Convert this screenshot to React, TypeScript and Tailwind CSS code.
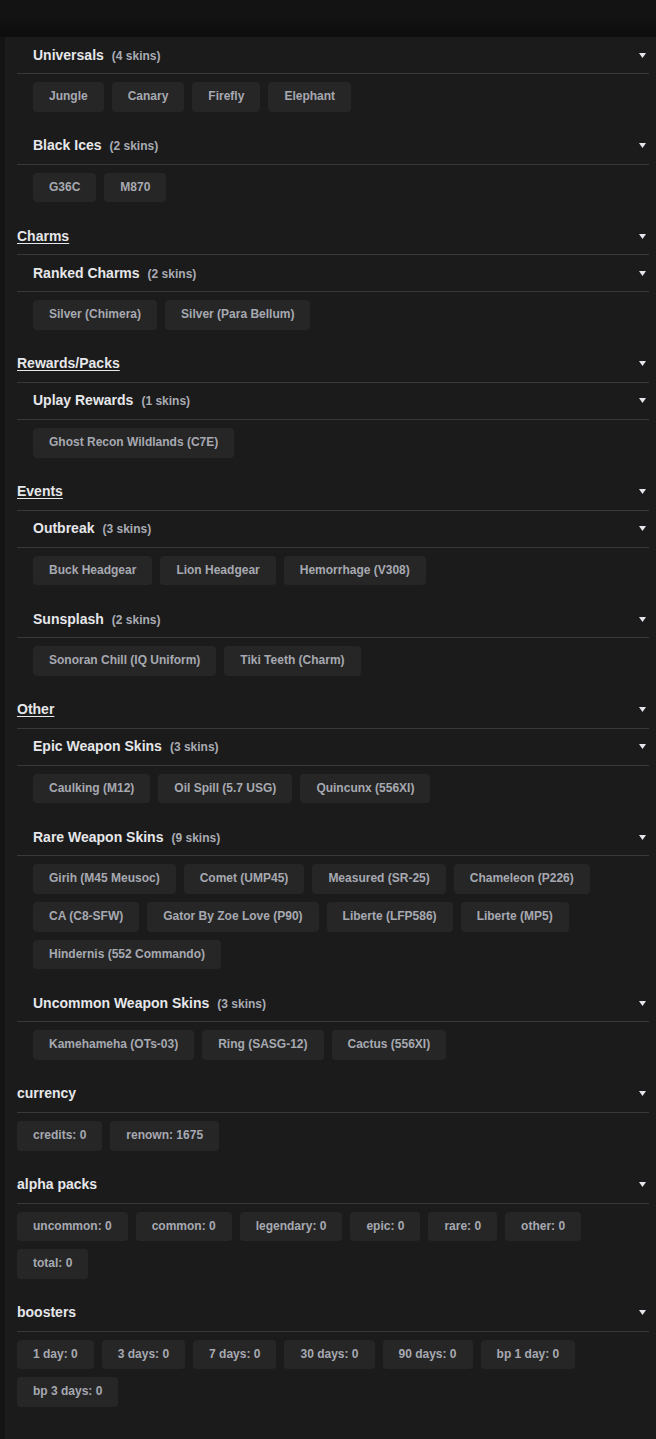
import React from "react";

type Sub = { title: string; items: string[] };
type Cat = { title: string; subs: Sub[] };

const categories: Cat[] = [
  {
    title: "",
    subs: [
      { title: "Universals", items: ["Jungle", "Canary", "Firefly", "Elephant"] },
      { title: "Black Ices", items: ["G36C", "M870"] },
    ],
  },
  {
    title: "Charms",
    subs: [{ title: "Ranked Charms", items: ["Silver (Chimera)", "Silver (Para Bellum)"] }],
  },
  {
    title: "Rewards/Packs",
    subs: [{ title: "Uplay Rewards", items: ["Ghost Recon Wildlands (C7E)"] }],
  },
  {
    title: "Events",
    subs: [
      { title: "Outbreak", items: ["Buck Headgear", "Lion Headgear", "Hemorrhage (V308)"] },
      { title: "Sunsplash", items: ["Sonoran Chill (IQ Uniform)", "Tiki Teeth (Charm)"] },
    ],
  },
  {
    title: "Other",
    subs: [
      { title: "Epic Weapon Skins", items: ["Caulking (M12)", "Oil Spill (5.7 USG)", "Quincunx (556XI)"] },
      {
        title: "Rare Weapon Skins",
        items: [
          "Girih (M45 Meusoc)",
          "Comet (UMP45)",
          "Measured (SR-25)",
          "Chameleon (P226)",
          "CA (C8-SFW)",
          "Gator By Zoe Love (P90)",
          "Liberte (LFP586)",
          "Liberte (MP5)",
          "Hindernis (552 Commando)",
        ],
      },
      { title: "Uncommon Weapon Skins", items: ["Kamehameha (OTs-03)", "Ring (SASG-12)", "Cactus (556XI)"] },
    ],
  },
];

const stats: Sub[] = [
  { title: "currency", items: ["credits: 0", "renown: 1675"] },
  {
    title: "alpha packs",
    items: ["uncommon: 0", "common: 0", "legendary: 0", "epic: 0", "rare: 0", "other: 0", "total: 0"],
  },
  {
    title: "boosters",
    items: ["1 day: 0", "3 days: 0", "7 days: 0", "30 days: 0", "90 days: 0", "bp 1 day: 0", "bp 3 days: 0"],
  },
];

function Caret() {
  return (
    <svg width="7" height="5" viewBox="0 0 7 5" className="shrink-0">
      <path d="M0 0 H7 L3.5 5 Z" fill="#e4e6ec" />
    </svg>
  );
}

function Header({ children, indent }: { children: React.ReactNode; indent?: boolean }) {
  return (
    <div className={`flex h-[37px] items-center justify-between border-b border-[#383838] pr-[3px] ${indent ? "pl-4" : ""}`}>
      <div className="flex items-baseline">{children}</div>
      <Caret />
    </div>
  );
}

function Chips({ items, indent }: { items: string[]; indent?: boolean }) {
  return (
    <div className={`flex flex-wrap gap-x-2 gap-y-2 pt-2 pb-4 ${indent ? "pl-4" : ""}`}>
      {items.map((it) => (
        <div
          key={it}
          className="rounded-[4px] bg-[#262626] px-4 py-2 text-[12px] font-bold leading-[13.625px] text-[#a6a9b1]"
        >
          {it}
        </div>
      ))}
    </div>
  );
}

export default function App() {
  return (
    <div className="min-h-[1439px] bg-[#1b1b1b] font-['Liberation_Sans',Arial,sans-serif]">
      <div className="h-[37px] bg-gradient-to-b from-[#131313] via-[#121212] to-[#0d0d0d]" />
      <div className="flex">
        <div className="w-[5px] shrink-0 bg-[#141414]" />
        <div className="flex-1 pl-3 pr-[7px] pb-8">
          {categories.map((cat) => (
            <div key={cat.title || "root"}>
              {cat.title && (
                <Header>
                  <span className="text-[14px] font-bold text-[#e6e7ea] underline underline-offset-2">{cat.title}</span>
                </Header>
              )}
              {cat.subs.map((s) => (
                <div key={s.title}>
                  <Header indent>
                    <span className="text-[14px] font-bold text-[#e6e7ea]">{s.title}</span>
                    <span className="ml-2 text-[12px] font-bold text-[#a9acb4]">({s.items.length} skins)</span>
                  </Header>
                  <Chips items={s.items} indent />
                </div>
              ))}
            </div>
          ))}
          {stats.map((s) => (
            <div key={s.title}>
              <Header>
                <span className="text-[14px] font-bold text-[#e6e7ea]">{s.title}</span>
              </Header>
              <Chips items={s.items} />
            </div>
          ))}
        </div>
      </div>
    </div>
  );
}
